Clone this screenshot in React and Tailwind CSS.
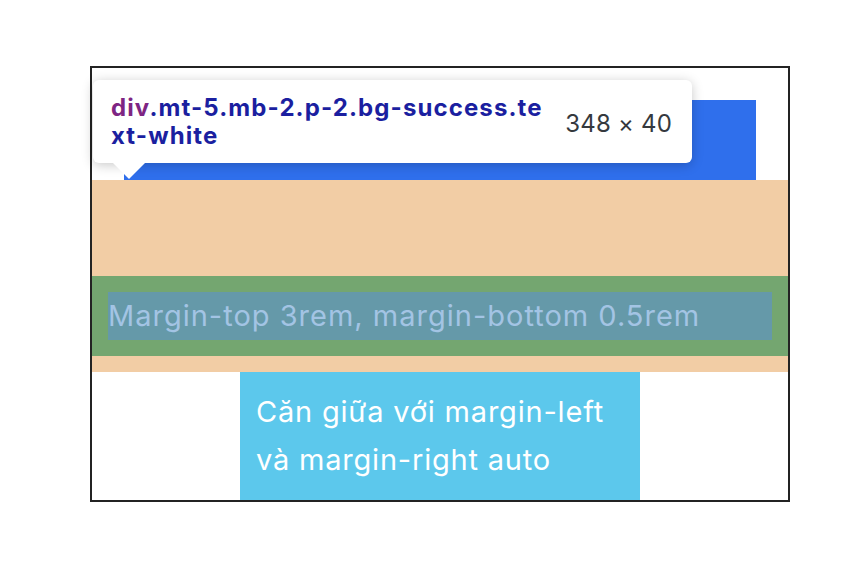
const App = () => {
  return (
    <div
      className="relative w-[868px] h-[570px] bg-white pt-[66px] pl-[90px]"
      style={{ fontFamily: 'Inter, "Noto Sans", sans-serif' }}
    >
      <div className="w-[700px] h-[436px] border-2 border-[#232323] overflow-hidden">
        <div className="mx-[32px] mt-[32px] h-[80px] bg-[#2f6fec]"></div>

        <div className="bg-[#f2cda5] pt-[96px] pb-[16px]">
          <div className="bg-[#74a670] p-[16px]">
            <div className="bg-[#6599a9] text-[#a3c4e4] text-[29px] leading-[48px] tracking-[1px]">
              Margin-top 3rem, margin-bottom 0.5rem
            </div>
          </div>
        </div>

        <div className="w-[400px] mx-auto p-[16px] bg-[#5cc8ec] text-white text-[29px] leading-[48px] tracking-[0.8px]">
          Căn giữa với margin-left và margin-right auto
        </div>
      </div>

      {/* devtools inspect tooltip */}
      <div className="absolute left-[93px] top-[80px] w-[599px] h-[83px] bg-white rounded-[6px] shadow-[0_2px_12px_rgba(0,0,0,0.22)] flex items-center justify-between pl-[18px] pr-[20px]">
        <div className="text-[24px] leading-[28px] font-bold text-[#1b1fa0] tracking-[1.1px]">
          <div>
            <span className="text-[#7e2583]">div</span>.mt-5.mb-2.p-2.bg-success.te
          </div>
          <div>xt-white</div>
        </div>
        <div className="pt-[5px] text-[24px] text-[#35393e] tracking-[0.2px]">348 × 40</div>
      </div>
      <svg
        className="absolute left-[112px] top-[162px]"
        width="34"
        height="18"
        viewBox="0 0 34 18"
      >
        <polygon points="0,0 34,0 17,17" fill="#ffffff" />
      </svg>
    </div>
  );
};

export default App;
